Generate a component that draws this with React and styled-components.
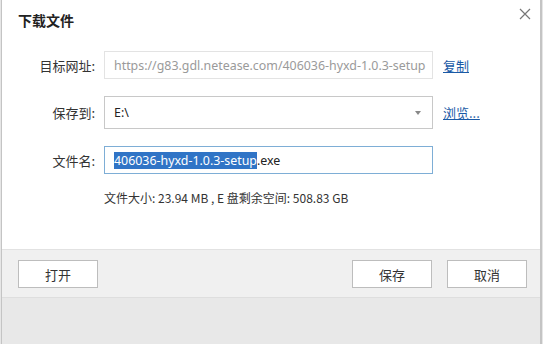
import React from "react";
import styled, { createGlobalStyle } from "styled-components";

const Global = createGlobalStyle`
  html, body { margin: 0; padding: 0; background: #e6e6e6; }
  body { font-family: "Noto Sans", "Noto Sans CJK SC", sans-serif; }
`;

const Window = styled.div`
  height: 344px;
  box-sizing: border-box;
  border-left: 1px solid #c4c4c4;
  border-right: 2px solid #c4c4c4;
  margin-left: 1px;
  width: 541px;
  display: flex;
  flex-direction: column;
  background: #e8e8e8;
`;

const Body = styled.div`
  height: 249px;
  background: #fff;
  box-sizing: border-box;
  position: relative;
`;

const TitleBar = styled.div`
  display: flex;
  align-items: center;
  height: 40px;
  padding: 0 0 0 16px;
`;

const Title = styled.h1`
  margin: 0;
  font-family: "Noto Sans CJK SC", sans-serif;
  font-size: 14px;
  font-weight: 700;
  color: #222;
`;

const Close = styled.button`
  position: absolute;
  right: 7px;
  top: 6px;
  width: 16px;
  height: 16px;
  border: 0;
  padding: 0;
  background: transparent;
  display: flex;
  align-items: center;
  justify-content: center;
`;

const Form = styled.div`
  display: grid;
  grid-template-columns: 93px 329px auto;
  column-gap: 9px;
  row-gap: 17px;
  align-items: center;
  margin-top: 11px;
`;

const Label = styled.label`
  text-align: right;
  font-family: "Noto Sans CJK SC", sans-serif;
  font-size: 13px;
  color: #333;
`;

const Field = styled.div`
  box-sizing: border-box;
  height: ${(p) => p.$h}px;
  border: 1px solid ${(p) => p.$border};
  background: #fff;
  display: flex;
  align-items: center;
  padding: 0 9px;
  font-family: "Noto Sans", "Noto Sans CJK SC", sans-serif;
  font-size: 12.4px;
  color: ${(p) => p.$color || "#222"};
  white-space: nowrap;
  overflow: hidden;
  position: relative;
`;

const Arrow = styled.span`
  position: absolute;
  right: 11px;
  top: 50%;
  margin-top: -2px;
  width: 0;
  height: 0;
  border-left: 3px solid transparent;
  border-right: 3px solid transparent;
  border-top: 4px solid #888;
`;

const Selected = styled.span`
  background: #3074c6;
  color: #fff;
`;

const Link = styled.a`
  font-family: "Noto Sans CJK SC", sans-serif;
  font-size: 13px;
  color: #1a5aa6;
  text-decoration: underline;
  margin-left: 1px;
`;

const Info = styled.div`
  margin: 15px 0 0 102px;
  font-family: "Noto Sans CJK SC", sans-serif;
  font-size: 12px;
  color: #333;
`;

const Footer = styled.div`
  height: 49px;
  background: #f0f0f0;
  border-top: 1px solid #e2e2e2;
  border-bottom: 1px solid #dedede;
  display: flex;
  align-items: center;
  padding: 0 13px 0 16px;
  gap: 15px;
  box-sizing: border-box;
`;

const Spacer = styled.div`
  flex: 1;
`;

const Button = styled.button`
  width: 80px;
  height: 28px;
  box-sizing: border-box;
  background: #fff;
  border: 1px solid #bdbdbd;
  font-family: "Noto Sans CJK SC", sans-serif;
  font-size: 13px;
  color: #333;
  padding: 0;
  margin-top: 1px;
`;

export default function App() {
  return (
    <>
      <Global />
      <Window>
        <Body>
          <TitleBar>
            <Title>下载文件</Title>
          </TitleBar>
          <Close aria-label="关闭">
            <svg width="12" height="12" viewBox="0 0 12 12">
              <path d="M1 1L11 11M11 1L1 11" stroke="#777" strokeWidth="1.2" fill="none" />
            </svg>
          </Close>
          <Form>
            <Label>目标网址:</Label>
            <Field $h={28} $border="#e3e3e3" $color="#9a9a9a">
              https://g83.gdl.netease.com/406036-hyxd-1.0.3-setup
            </Field>
            <Link>复制</Link>
            <Label>保存到:</Label>
            <Field $h={33} $border="#c8c8c8">
              E:\
              <Arrow />
            </Field>
            <Link>浏览...</Link>
            <Label>文件名:</Label>
            <Field $h={28} $border="#7eaed6">
              <Selected>406036-hyxd-1.0.3-setup</Selected>.exe
            </Field>
            <span />
          </Form>
          <Info>文件大小: 23.94 MB , E 盘剩余空间: 508.83 GB</Info>
        </Body>
        <Footer>
          <Button>打开</Button>
          <Spacer />
          <Button>保存</Button>
          <Button>取消</Button>
        </Footer>
      </Window>
    </>
  );
}
